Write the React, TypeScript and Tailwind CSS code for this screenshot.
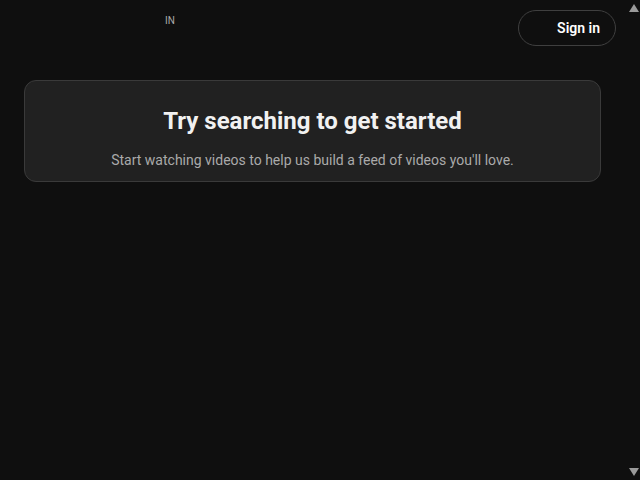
export default function App() {
  return (
    <div className="flex h-screen bg-[#0f0f0f] font-['Roboto',sans-serif] text-white">
      <div className="min-w-0 flex-1">
        {/* Header */}
        <div className="relative flex h-14 items-center justify-end px-[9px]">
          <span className="absolute left-[165px] top-[13px] text-[10px] text-[#aaaaaa]">IN</span>
          <button className="flex h-9 w-[98px] items-center justify-end rounded-full border border-[#3f3f3f] pr-[15px] text-sm font-semibold">
            Sign in
          </button>
        </div>

        {/* Feed filter placeholder */}
        <div className="mx-6 mt-6 flex flex-col items-center rounded-xl border border-[#3a3a3a] bg-[#212121] pt-[24px] pb-[11px]">
          <h2 className="text-2xl font-bold leading-8 text-[#f1f1f1]">Try searching to get started</h2>
          <p className="mt-[13px] text-sm leading-5 text-[#aaaaaa]">
            Start watching videos to help us build a feed of videos you'll love.
          </p>
        </div>
      </div>

      {/* Scrollbar */}
      <div className="flex w-[15px] flex-col items-center justify-between py-1 pl-[2px]">
        <svg width="10" height="8" viewBox="0 0 10 8">
          <path d="M5 0L10 8H0Z" fill="#9a9a9a" />
        </svg>
        <svg width="10" height="8" viewBox="0 0 10 8">
          <path d="M0 0H10L5 8Z" fill="#9a9a9a" />
        </svg>
      </div>
    </div>
  );
}
